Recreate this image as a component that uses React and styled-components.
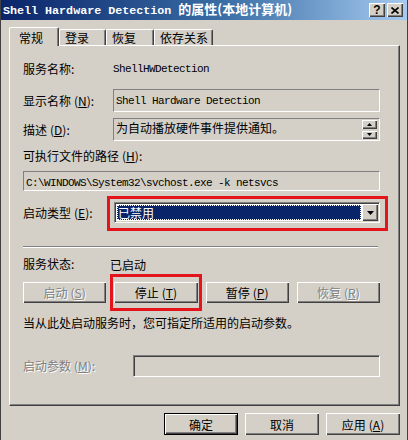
import React from 'react';
import styled, { createGlobalStyle } from 'styled-components';

const GlobalStyle = createGlobalStyle`
  html, body {
    margin: 0;
    padding: 0;
    background: #d4d0c8;
  }
  body {
    font-family: "Noto Sans CJK SC", "Liberation Sans", sans-serif;
    font-size: 12px;
    color: #000;
  }
`;

const Window = styled.div`
  width: 408px;
  height: 440px;
  box-sizing: border-box;
  background: #d4d0c8;
  border-left: 1px solid #404040;
  border-right: 1px solid #404040;
  display: flex;
  flex-direction: column;
  overflow: hidden;
`;

const TitleBar = styled.div`
  height: 20px;
  flex-shrink: 0;
  display: flex;
  align-items: center;
  justify-content: space-between;
  padding: 0 4px 0 2px;
  background: linear-gradient(to right, #0a246a 0%, #3a6ea5 55%, #a6caf0 100%);
`;

const Title = styled.div`
  color: #fff;
  font-weight: bold;
  font-size: 13px;
  line-height: 20px;
  white-space: nowrap;
  font-family: "Noto Sans CJK SC", sans-serif;

  span {
    font-family: "Liberation Mono", monospace;
    font-size: 11.7px;
  }
`;

const CaptionButtons = styled.div`
  display: flex;
  gap: 2px;
`;

const CaptionButton = styled.div`
  width: 16px;
  height: 14px;
  box-sizing: border-box;
  background: #d4d0c8;
  box-shadow: inset 1px 1px #fff, inset -1px -1px #404040, inset -2px -2px #808080;
  display: flex;
  align-items: center;
  justify-content: center;
  font-family: "Liberation Sans", sans-serif;
  font-weight: bold;
  font-size: 12px;
  line-height: 14px;
  color: #000;
`;

const TabStrip = styled.div`
  margin-top: 7px;
  height: 18px;
  padding-left: 8px;
  display: flex;
  align-items: flex-end;
  position: relative;
  z-index: 1;
`;

const Tab = styled.div`
  width: ${p => p.$w}px;
  height: ${p => (p.$active ? 19 : 16)}px;
  margin-bottom: ${p => (p.$active ? -1 : 0)}px;
  box-sizing: border-box;
  background: #d4d0c8;
  border-top: 1px solid #fff;
  border-left: 1px solid #fff;
  border-right: 1px solid #404040;
  border-radius: 2px 2px 0 0;
  box-shadow: inset -1px 0 #808080;
  padding-top: ${p => (p.$active ? 3 : 1)}px;
  padding-left: ${p => (p.$active ? 9 : 5)}px;
  line-height: 14px;
  font-size: 12px;
`;

const Panel = styled.div`
  margin-left: 8px;
  width: 391px;
  height: 361px;
  box-sizing: border-box;
  border: 1px solid;
  border-color: #fff #404040 #404040 #fff;
  box-shadow: inset -1px -1px #808080;
  padding: 15px 19px 0 13px;
  display: flex;
  flex-direction: column;
`;

const Row = styled.div`
  display: flex;
  align-items: center;
  margin-top: ${p => p.$mt || 0}px;
  height: ${p => p.$h || 16}px;
`;

const Label = styled.div`
  width: ${p => p.$w || 90}px;
  flex-shrink: 0;
  white-space: nowrap;
  line-height: 16px;
  color: ${p => (p.$disabled ? '#808080' : '#000')};
  text-shadow: ${p => (p.$disabled ? '1px 1px #fff' : 'none')};
`;

const Mono = styled.span`
  font-family: "Liberation Mono", monospace;
  font-size: 11px;
  letter-spacing: -0.6px;
  white-space: nowrap;
`;

const Value = styled.div`
  white-space: nowrap;
`;

const ReadBox = styled.div`
  flex: 1;
  height: 100%;
  box-sizing: border-box;
  border: 1px solid;
  border-color: #808080 #fff #fff #808080;
  display: flex;
  padding: 1px 1px 1px 2px;
  line-height: 16px;
`;

const BoxText = styled.div`
  flex: 1;
  white-space: nowrap;
  overflow: hidden;
`;

const Spin = styled.div`
  display: flex;
  flex-direction: column;
  gap: 2px;
  padding-right: 1px;
`;

const SpinButton = styled.div`
  width: 15px;
  height: 9px;
  box-sizing: border-box;
  background: #d4d0c8;
  box-shadow: inset 1px 1px #fff, inset -1px -1px #404040, inset -2px -2px #808080;
  display: flex;
  align-items: center;
  justify-content: center;
`;

const Highlightable = styled.div`
  position: relative;
  display: flex;
  flex: ${p => (p.$grow ? 1 : 'initial')};
  height: 100%;
`;

// red annotation frame drawn over the control
const Highlight = styled.div`
  position: absolute;
  top: ${p => p.$t}px;
  right: ${p => p.$r}px;
  bottom: ${p => p.$b}px;
  left: ${p => p.$l}px;
  border: 3px solid #e3141b;
  pointer-events: none;
`;

const Combo = styled.div`
  flex: 1;
  height: 21px;
  box-sizing: border-box;
  background: #fff;
  border: 1px solid;
  border-color: #808080 #fff #fff #808080;
  box-shadow: inset 1px 1px #404040, inset -1px -1px #d4d0c8;
  padding: 2px;
  display: flex;
  gap: 1px;
`;

const ComboValue = styled.div`
  flex: 1;
  background: #0a246a;
  color: #fff;
  outline: 1px dotted #fff;
  outline-offset: -1px;
  line-height: 15px;
  padding-left: 1px;
`;

const DropButton = styled.div`
  width: 16px;
  margin: -1px -1px -1px 0;
  background: #d4d0c8;
  box-shadow: inset 1px 1px #fff, inset -1px -1px #404040, inset -2px -2px #808080;
  display: flex;
  align-items: center;
  justify-content: center;
`;

const Separator = styled.div`
  margin-top: ${p => p.$mt}px;
  width: 355px;
  border-top: 1px solid #808080;
  border-bottom: 1px solid #fff;
`;

const ButtonGrid = styled.div`
  display: grid;
  grid-template-columns: repeat(4, 1fr);
  gap: 8px;
  margin-top: ${p => p.$mt}px;
  height: 21px;
`;

const Button = styled.div`
  width: ${p => (p.$w ? `${p.$w}px` : '100%')};
  height: ${p => p.$h || 21}px;
  box-sizing: border-box;
  background: #d4d0c8;
  border: ${p => (p.$default ? '1px solid #000' : 'none')};
  box-shadow: inset 1px 1px #fff, inset -1px -1px #404040, inset -2px -2px #808080;
  display: flex;
  align-items: center;
  justify-content: center;
  white-space: nowrap;
  color: ${p => (p.$disabled ? '#808080' : '#000')};
  text-shadow: ${p => (p.$disabled ? '1px 1px #fff' : 'none')};
`;

const Note = styled.div`
  margin-top: ${p => p.$mt}px;
  line-height: 16px;
  white-space: nowrap;
`;

const Input = styled.div`
  flex: 1;
  height: 22px;
  box-sizing: border-box;
  border: 1px solid;
  border-color: #808080 #fff #fff #808080;
  box-shadow: inset 1px 1px #404040, inset -1px -1px #d4d0c8;
  background: #d4d0c8;
`;

const Footer = styled.div`
  display: flex;
  justify-content: flex-end;
  gap: 7px;
  margin-top: 7px;
  padding-right: 7px;
`;

const KeyMark = styled.span`
  margin-left: 3px;

  u {
    text-decoration: underline;
    text-underline-offset: 1px;
  }
`;

const Arrow = ({ dir = 'down', size = 7 }) => (
  <svg width={size} height={Math.ceil(size / 2)} viewBox="0 0 7 4">
    {dir === 'down'
      ? <polygon points="0,0 7,0 3.5,4" fill="#000" />
      : <polygon points="0,4 7,4 3.5,0" fill="#000" />}
  </svg>
);

const Key = ({ k }) => (
  <KeyMark>(<u>{k}</u>)</KeyMark>
);

export default function App() {
  return (
    <>
      <GlobalStyle />
      <Window>
        <TitleBar>
          <Title><span>Shell Hardware Detection </span>的属性(本地计算机)</Title>
          <CaptionButtons>
            <CaptionButton>?</CaptionButton>
            <CaptionButton>
              <svg width="8" height="7" viewBox="0 0 8 7">
                <path d="M0.5 0.5 L7.5 6.5 M7.5 0.5 L0.5 6.5" stroke="#000" strokeWidth="1.6" />
              </svg>
            </CaptionButton>
          </CaptionButtons>
        </TitleBar>

        <TabStrip>
          <Tab $active $w={50}>常规</Tab>
          <Tab $w={47}>登录</Tab>
          <Tab $w={48}>恢复</Tab>
          <Tab $w={59}>依存关系</Tab>
        </TabStrip>

        <Panel>
          <Row>
            <Label>服务名称:</Label>
            <Mono>ShellHWDetection</Mono>
          </Row>

          <Row $mt={12} $h={23}>
            <Label>显示名称<Key k="N" />:</Label>
            <ReadBox>
              <BoxText><Mono>Shell Hardware Detection</Mono></BoxText>
            </ReadBox>
          </Row>

          <Row $mt={6} $h={23}>
            <Label>描述<Key k="D" />:</Label>
            <ReadBox>
              <BoxText>为自动播放硬件事件提供通知。</BoxText>
              <Spin>
                <SpinButton><Arrow dir="up" size={5} /></SpinButton>
                <SpinButton><Arrow dir="down" size={5} /></SpinButton>
              </Spin>
            </ReadBox>
          </Row>

          <Row $mt={7}>
            <Label $w={200}>可执行文件的路径<Key k="H" />:</Label>
          </Row>

          <Row $mt={7} $h={20}>
            <ReadBox>
              <BoxText><Mono>C:\WINDOWS\System32\svchost.exe -k netsvcs</Mono></BoxText>
            </ReadBox>
          </Row>

          <Row $mt={11} $h={21}>
            <Label $w={91}>启动类型<Key k="E" />:</Label>
            <Highlightable $grow>
              <Combo>
                <ComboValue>已禁用</ComboValue>
                <DropButton><Arrow /></DropButton>
              </Combo>
              <Highlight $t={-6} $r={-8} $b={-8} $l={-7} />
            </Highlightable>
          </Row>

          <Separator $mt={23} />

          <Row $mt={8}>
            <Label $w={87}>服务状态:</Label>
            <Value>已启动</Value>
          </Row>

          <ButtonGrid $mt={10}>
            <Button $disabled>启动<Key k="S" /></Button>
            <Highlightable>
              <Button>停止<Key k="T" /></Button>
              <Highlight $t={-8} $r={-4} $b={-8} $l={-4} />
            </Highlightable>
            <Button>暂停<Key k="P" /></Button>
            <Button $disabled>恢复<Key k="R" /></Button>
          </ButtonGrid>

          <Note $mt={12}>当从此处启动服务时，您可指定所适用的启动参数。</Note>

          <Row $mt={24} $h={22}>
            <Label $w={110} $disabled>启动参数<Key k="M" />:</Label>
            <Input />
          </Row>
        </Panel>

        <Footer>
          <Button $default $w={74} $h={22}>确定</Button>
          <Button $w={74} $h={22}>取消</Button>
          <Button $w={74} $h={22}>应用<Key k="A" /></Button>
        </Footer>
      </Window>
    </>
  );
}
